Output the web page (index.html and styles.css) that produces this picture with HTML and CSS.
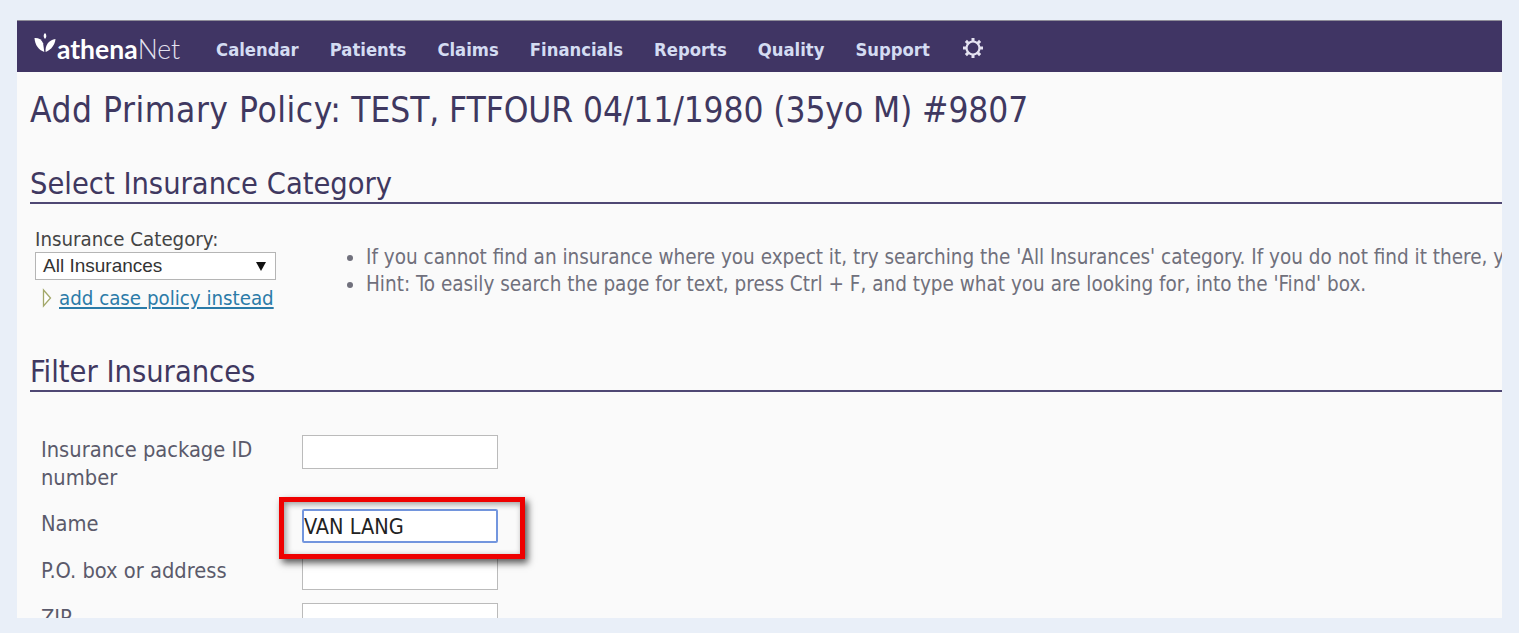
FILE: index.html
```html
<!DOCTYPE html>
<html lang="en">
<head>
    <meta charset="UTF-8">
    <meta name="viewport" content="width=device-width, initial-scale=1.0">
    <title>Add Primary Policy</title>
    <link rel="stylesheet" href="styles.css">
</head>
<body>
    <div class="frame">
        <nav class="topnav">
            <a class="logo" href="#">
                <svg class="logo-mark" viewBox="0 0 22 20" width="22" height="20">
                    <path d="M11 0c1.800 1.700 1.800 4 0 6-1.800-2-1.800-4.300 0-6z" fill="#fff"/>
                    <path d="M0.500 5c4-0.300 7.200 1.500 8.600 5.200l1.200 8.800c-5.800-2-9.400-7.200-9.800-14z" fill="#fff"/>
                    <path d="M21.500 6c-0.600 6-4.200 10.600-9.800 13-1-6.500 3.300-12.300 9.800-13z" fill="#fff"/>
                </svg>
                <span class="logo-text"><b>athena</b>Net</span>
            </a>
            <a class="nav-link" href="#">Calendar</a>
            <a class="nav-link" href="#">Patients</a>
            <a class="nav-link" href="#">Claims</a>
            <a class="nav-link" href="#">Financials</a>
            <a class="nav-link" href="#">Reports</a>
            <a class="nav-link" href="#">Quality</a>
            <a class="nav-link" href="#">Support</a>
            <svg class="gear" viewBox="0 0 24 24" width="24" height="24">
                <circle cx="12" cy="12" r="6.500" fill="none" stroke="#e4e2f0" stroke-width="2.200"/>
                <g stroke="#e4e2f0" stroke-width="3">
                    <path d="M12 2v4M12 18v4M2 12h4M18 12h4M4.900 4.900l2.800 2.800M16.300 16.300l2.800 2.800M4.900 19.100l2.800-2.800M16.300 7.700l2.800-2.800"/>
                </g>
            </svg>
        </nav>

        <main class="content">
            <h1><span class="title-lead">Add Primary Policy:</span> TEST, FTFOUR 04/11/1980 (35yo M) #9807</h1>

            <h2 class="section-title">Select Insurance Category</h2>
            <div class="category-row">
                <div class="category-box">
                    <label for="category">Insurance Category:</label>
                    <div class="fake-select" id="category">
                        <span>All Insurances</span>
                        <span class="select-arrow"></span>
                    </div>
                    <div class="case-link">
                        <svg viewBox="0 0 10 20" width="10" height="20"><path d="M1.500 2l7 8-7 8z" fill="#fff" stroke="#a3a86a" stroke-width="1.300"/></svg>
                        <a href="#">add case policy instead</a>
                    </div>
                </div>
                <ul class="hints">
                    <li>If you cannot find an insurance where you expect it, try searching the 'All Insurances' category. If you do not find it there, you may need to add it.</li>
                    <li>Hint: To easily search the page for text, press Ctrl + F, and type what you are looking for, into the 'Find' box.</li>
                </ul>
            </div>

            <h2 class="section-title filter-title">Filter Insurances</h2>
            <div class="filter-form">
                <label class="tall-label" for="package-id">Insurance package ID number</label>
                <input class="text-input" type="text" id="package-id">
                <label for="name">Name</label>
                <div class="highlight-wrap">
                    <input class="text-input focused" type="text" id="name" value="VAN LANG">
                    <div class="highlight-box"></div>
                </div>
                <label for="address">P.O. box or address</label>
                <input class="text-input" type="text" id="address">
                <label for="zip">ZIP</label>
                <input class="text-input" type="text" id="zip">
            </div>
        </main>
    </div>
</body>
</html>
```

FILE: styles.css
```css
html, body {
    height: 100%;
}

body {
    margin: 0;
    overflow: hidden;
    background-color: #e9eff8;
    font-family: "DejaVu Sans Condensed", "DejaVu Sans", sans-serif;
    color: #4d4b63;
}

.frame {
    margin: 20px 17px 0;
    height: 598px;
    overflow: hidden;
    background-color: #fafafa;
}

.topnav {
    display: flex;
    align-items: center;
    box-sizing: border-box;
    height: 52px;
    padding-top: 5px;
    border-top: 1px solid #8f8d99;
    background-color: #403564;
}

.logo {
    display: flex;
    align-items: center;
    gap: 1px;
    margin-left: 17px;
    margin-right: 36px;
    color: #fff;
    text-decoration: none;
}

.logo-mark {
    margin-bottom: 12px;
}

.logo-text {
    font-family: "Lato", sans-serif;
    font-size: 26.5px;
    font-weight: 300;
    color: #e4e2f0;
}

.logo-text b {
    font-weight: 700;
    color: #fff;
}

.nav-link {
    margin-right: 31px;
    font-size: 18.3px;
    font-weight: 700;
    color: #d4dcf2;
    text-decoration: none;
}

.gear {
    margin-bottom: 3px;
}

.content {
    padding: 0 0 0 13px;
}

h1 {
    margin: 16px 0 0;
    font-size: 35px;
    font-weight: 400;
    line-height: 44px;
    letter-spacing: -0.1px;
    white-space: nowrap;
    color: #3f3860;
}

.title-lead {
    letter-spacing: 0.55px;
}

.section-title {
    margin: 0;
    padding-top: 2px;
    border-bottom: 2px solid #4f4874;
    font-size: 30.5px;
    font-weight: 400;
    line-height: 36px;
    color: #3f3860;
}

h1 + .section-title {
    margin-top: 32px;
}

.category-row {
    display: flex;
    margin-top: 24px;
}

.category-box {
    flex: none;
    width: 311px;
    padding-left: 5px;
    box-sizing: border-box;
    font-size: 20.3px;
}

.category-box label {
    display: block;
    line-height: 22px;
    margin-bottom: 2px;
    color: #444;
}

.fake-select {
    display: flex;
    justify-content: space-between;
    align-items: center;
    width: 241px;
    height: 28px;
    box-sizing: border-box;
    padding: 0 9px 0 7px;
    border: 1px solid #b5b5b5;
    background-color: #fff;
    font-family: "Liberation Sans", sans-serif;
    font-size: 19px;
    color: #333;
}

.select-arrow {
    width: 0;
    height: 0;
    border-left: 5px solid transparent;
    border-right: 5px solid transparent;
    border-top: 9px solid #111;
}

.case-link {
    display: flex;
    align-items: center;
    gap: 7px;
    height: 20px;
    margin-top: 8px;
    padding-left: 7px;
}

.case-link a {
    color: #2b7ba8;
}

.hints {
    margin: 16px 0 0;
    padding: 0 0 0 25px;
    font-size: 20.5px;
    line-height: 27px;
    white-space: nowrap;
    color: #70707c;
}

.filter-title {
    margin-top: 44px;
}

.filter-form {
    display: grid;
    grid-template-columns: 261px 196px;
    margin-top: 43px;
    padding-left: 11px;
    font-size: 21.7px;
    color: #5b5a6b;
}

.filter-form label {
    padding-top: 1px;
    line-height: 28px;
}

.text-input {
    display: block;
    width: 196px;
    height: 34px;
    box-sizing: border-box;
    margin: 0 0 13px;
    padding: 0;
    border: 1px solid #bbb;
    background-color: #fff;
    font-family: "DejaVu Sans Condensed", "DejaVu Sans", sans-serif;
    font-size: 21.5px;
    color: #222;
}

.filter-form .tall-label {
    margin-bottom: 17px;
}

.focused {
    border: 2px solid #7396de;
    border-radius: 2px;
    outline: none;
}

.highlight-wrap {
    position: relative;
}

.highlight-box {
    position: absolute;
    top: -12px;
    left: -23px;
    width: 246px;
    height: 62px;
    box-sizing: border-box;
    border: 5px solid #ee0000;
    box-shadow: 3px 4px 7px rgba(0, 0, 0, 0.65), inset 2px 2px 6px rgba(0, 0, 0, 0.4);
}
```
